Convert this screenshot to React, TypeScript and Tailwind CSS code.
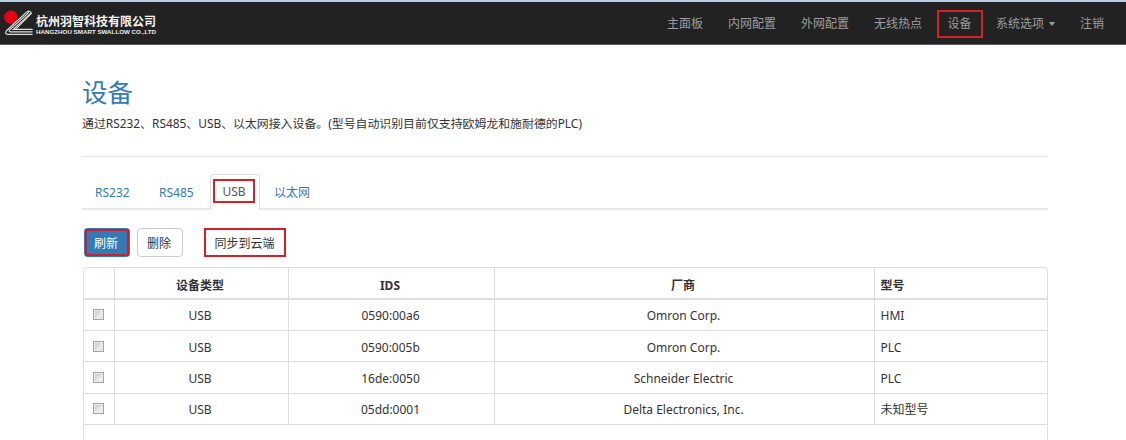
import React from "react";

const rows = [
  { type: "USB", ids: "0590:00a6", vendor: "Omron Corp.", model: "HMI" },
  { type: "USB", ids: "0590:005b", vendor: "Omron Corp.", model: "PLC" },
  { type: "USB", ids: "16de:0050", vendor: "Schneider Electric", model: "PLC" },
  { type: "USB", ids: "05dd:0001", vendor: "Delta Electronics, Inc.", model: "未知型号" },
];

function Logo() {
  return (
    <div className="flex items-center pl-1">
      <svg width="30" height="27" viewBox="0 0 30 27" fill="none" className="block">
        <circle cx="7" cy="7.2" r="6.8" fill="#e60012" />
        <path d="M28.5 24.3H3.5Q-.5 24 2.8 20L22 2.4Q26.8-.6 27.8 3.6L12.5 19H28.5Z" fill="#222" />
        <g stroke="#dedede" strokeWidth="1.2" strokeLinecap="round">
          <path d="M28.2 24.3H4Q-.2 24 3 20.2L22.2 2.4Q26.4-.4 27.4 3.4L12 18.8" />
          <path d="M28.2 21.8H6.4Q4.2 21.4 6 19.6L24.6 2.6" />
          <path d="M28.2 19.3H9.4L26.6 3.4" />
        </g>
      </svg>
      <div className="flex w-[122px] flex-col pt-[4px] pl-[2px] font-bold text-[#f2f2f2]">
        <span className="whitespace-nowrap text-[12px] leading-[13px]">杭州羽智科技有限公司</span>
        <svg width="122" height="7" className="block">
          <text x="0" y="6" textLength="120" lengthAdjust="spacingAndGlyphs" fill="#ededed" fontSize="6" fontWeight="700" fontFamily="Liberation Sans, sans-serif">
            HANGZHOU SMART SWALLOW CO.,LTD
          </text>
        </svg>
      </div>
    </div>
  );
}

function Check() {
  return (
    <span className="mx-auto block h-[11px] w-[11px] border border-[#a0a3a5] bg-[#f0f0f0] p-px">
      <span className="block h-full w-full border border-[#cfd1d4] border-r-[#e4e4e4] border-b-[#e4e4e4] bg-linear-to-br from-[#cbcfd4] to-[#f6f6f6]" />
    </span>
  );
}

export default function App() {
  return (
    <div className="h-[440px] overflow-hidden bg-white font-['Noto_Sans','Noto_Sans_CJK_SC',sans-serif] text-[12px] leading-[17px] text-[#333]">
      <header className="flex h-[45px] items-center justify-between border-t-2 border-b border-t-[#b3cbe3] border-b-[#5c5c5c] bg-[#222]">
        <Logo />
        <nav className="flex items-center pt-px pr-[22px] text-[#9d9d9d]">
          <a className="mr-[25px]">主面板</a>
          <a className="mr-[25px]">内网配置</a>
          <a className="mr-[25px]">外网配置</a>
          <a className="mr-[15px]">无线热点</a>
          <a className="mr-[13px] flex h-[28px] w-[46px] items-center justify-center border-2 border-[#d71f28] pr-px">设备</a>
          <a className="mr-[25px] flex items-center gap-[5px]">
            系统选项
            <span className="border-x-[3.5px] border-t-[4px] border-x-transparent border-t-[#9d9d9d]" />
          </a>
          <a>注销</a>
        </nav>
      </header>

      <main className="ml-[82px] w-[966px]">
        <h1 className="pt-[29px] text-[25.5px] leading-[36px] text-[#337ab7]">设备</h1>
        <p className="mt-[5px] whitespace-nowrap text-[11.9px]">
          通过RS232、RS485、USB、以太网接入设备。(型号自动识别目前仅支持欧姆龙和施耐德的PLC)
        </p>
        <hr className="mt-[24px] border-t border-[#e6e6e6]" />

        <div className="mt-[17px] flex h-[36px] border-b-2 border-[#e9e9e9] text-[#337ab7]">
          <a className="flex w-[64px] items-center pt-[2px] pl-[13px]">RS232</a>
          <a className="flex w-[64px] items-center pt-[2px] pl-[13px]">RS485</a>
          <a className="flex h-[36px] w-[50px] justify-center rounded-t-[4px] border border-b-0 border-[#dedede] bg-white pt-[4px] pr-[2px] text-[#555]">
            <span className="flex h-[24px] w-[42px] items-center justify-center border-[2px] border-[#d71f28] pt-px">USB</span>
          </a>
          <a className="flex items-center pt-[2px] pl-[14px]">以太网</a>
        </div>

        <div className="mt-[18px] flex h-[29px] pl-[2px]">
          <button className="flex w-[46px] items-center justify-center rounded-[4px] bg-[#337ab7] p-px text-white">
            <span className="flex h-full w-full items-center justify-center border-[2px] border-[#c9202e] pt-px pr-[2px]">刷新</span>
          </button>
          <button className="ml-[7px] w-[46px] rounded-[4px] border border-[#ccc] pt-px pr-[2px]">删除</button>
          <button className="ml-[21px] w-[82px] border-[2px] border-[#d71f28] pt-px pr-px">同步到云端</button>
        </div>

        <div className="mt-[10px] ml-px h-[200px] w-[965px] rounded-t-[4px] border border-[#dedede]">
          <table className="w-full table-fixed border-collapse text-center">
            <colgroup>
              <col className="w-[30px]" />
              <col className="w-[174px]" />
              <col className="w-[206px]" />
              <col className="w-[380px]" />
              <col />
            </colgroup>
            <thead>
              <tr className="h-[31px] border-b-2 border-[#dedede]">
                <th className="border-r border-[#dedede]" />
                <th className="border-r border-[#dedede] pt-[4px] pr-[2px]">设备类型</th>
                <th className="border-r border-[#dedede] pt-[4px] pr-[2px]">IDS</th>
                <th className="border-r border-[#dedede] pt-[4px] pr-[2px]">厂商</th>
                <th className="pt-[4px] pl-[6px] text-left">型号</th>
              </tr>
            </thead>
            <tbody>
              {rows.map((r) => (
                <tr key={r.ids} className="h-[31.4px] border-b border-[#dedede]">
                  <td className="border-r border-[#dedede]"><Check /></td>
                  <td className="border-r border-[#dedede] pt-[2px] pr-[2px]">{r.type}</td>
                  <td className="border-r border-[#dedede] pt-[2px] pr-px">{r.ids}</td>
                  <td className="border-r border-[#dedede] pt-[2px] pr-px">{r.vendor}</td>
                  <td className="pt-[2px] pl-[6px] text-left">{r.model}</td>
                </tr>
              ))}
            </tbody>
          </table>
        </div>
      </main>
    </div>
  );
}
